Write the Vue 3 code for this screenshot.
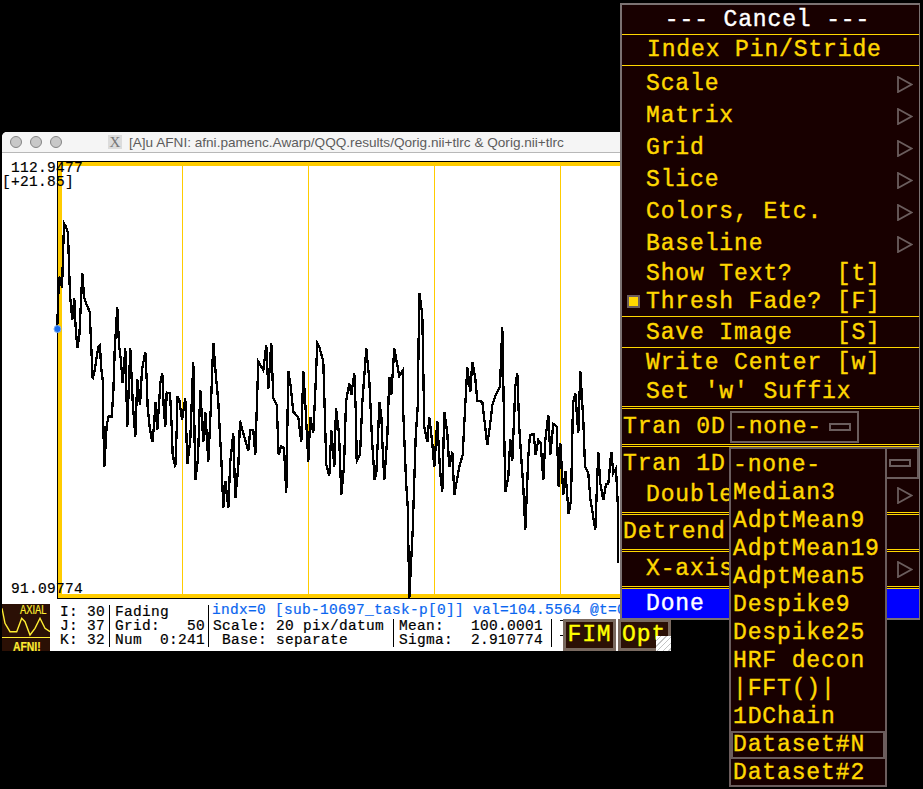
<template>
  <div class="desktop">
    <!-- graph window -->
    <div class="graph-window">
      <div class="titlebar">
        <span class="light"></span>
        <span class="light"></span>
        <span class="light"></span>
        <span class="x-icon">X</span>
        <span class="title-text">[A]u AFNI: afni.pamenc.Awarp/QQQ.results/Qorig.nii+tlrc &amp; Qorig.nii+tlrc</span>
      </div>
      <div class="plot">
        <svg class="plot-svg" width="669" height="447" viewBox="2 153 669 447">
          <rect x="57" y="161" width="614" height="438" fill="#000" />
          <rect x="58" y="162" width="613" height="436" fill="#ffcc00" />
          <rect x="62" y="166" width="609" height="428" fill="#fff" />
          <rect v-for="x in gridLines" :key="x" :x="x" y="166" width="1" height="428" fill="#ffcc00" />
          <polyline :points="tracePoints" fill="none" stroke="#000" stroke-width="2.3" shape-rendering="crispEdges" />
          <circle cx="57.5" cy="329" r="3.5" fill="#1a6ef0" stroke="#7fb0f5" stroke-width="1" />
        </svg>
        <div class="scale-top">112.9477</div>
        <div class="scale-range">[+21.85]</div>
        <div class="scale-bottom">91.09774</div>
      </div>
      <div class="info-bar">
        <div class="logo">
          <svg width="48" height="47" viewBox="2 604 48 47">
            <polyline :points="logoWave" fill="none" stroke="#ffee33" stroke-width="1.4" />
            <rect x="2" y="637" width="48" height="1" fill="#ffee33" />
          </svg>
          <span class="logo-top">AXIAL</span>
          <span class="logo-bottom">AFNI!</span>
        </div>
        <div class="info-col ijk">
          <div>I: 30</div>
          <div>J: 37</div>
          <div>K: 32</div>
        </div>
        <div class="info-col grid-col">
          <div>Fading</div>
          <div>{{ 'Grid:   50' }}</div>
          <div>{{ 'Num  0:241' }}</div>
        </div>
        <div class="info-right">
          <div class="index-line">indx=0 [sub-10697_task-p[0]] val=104.5564 @t=0</div>
          <div class="info-lower">
            <div class="info-col scale-col">
              <div>Scale: 20 pix/datum</div>
              <div>{{ ' Base: separate' }}</div>
            </div>
            <div class="info-col stats-col">
              <div>{{ 'Mean:   100.0001' }}</div>
              <div>{{ 'Sigma:  2.910774' }}</div>
            </div>
          </div>
        </div>
        <div class="ticks"></div>
        <div class="graph-btn fim">FIM</div>
        <div class="graph-btn opt">Opt</div>
        <div class="grip"></div>
      </div>
    </div>

    <!-- options menu -->
    <div class="menu">
      <div class="row cancel">{{ '--- Cancel ---' }}</div>
      <div class="sep"></div>
      <div class="row index-row">Index Pin/Stride</div>
      <div class="sep"></div>
      <div class="cascades">
        <div v-for="item in cascades" :key="item" class="row cascade">
          <span>{{ item }}</span>
          <svg class="arrow" width="16" height="17" viewBox="0 0 16 17"><path d="M1 1 L14.5 8.5 L1 16 Z" fill="none" stroke="#6b5d5d" stroke-width="1.8" /></svg>
        </div>
      </div>
      <div class="row toggle">{{ 'Show Text?   [t]' }}</div>
      <div class="row toggle">
        <span class="check"></span>{{ 'Thresh Fade? [F]' }}
      </div>
      <div class="sep"></div>
      <div class="row save-row">{{ 'Save Image   [S]' }}</div>
      <div class="sep"></div>
      <div class="row write-row">Write Center [w]</div>
      <div class="row write-row suffix">Set 'w' Suffix</div>
      <div class="double-sep"></div>
      <div class="row tran0">
        <span class="flush">Tran 0D</span>
        <div class="option-btn">-none-<span class="indicator"></span></div>
      </div>
      <div class="double-sep"></div>
      <div class="row tran1"><span class="flush">Tran 1D</span></div>
      <div class="row double-row">
        <span>Double</span>
        <svg class="arrow" width="16" height="17" viewBox="0 0 16 17"><path d="M1 1 L14.5 8.5 L1 16 Z" fill="none" stroke="#6b5d5d" stroke-width="1.8" /></svg>
      </div>
      <div class="double-sep"></div>
      <div class="row detrend"><span class="flush">Detrend</span></div>
      <div class="double-sep"></div>
      <div class="row xaxis">
        <span>X-axis</span>
        <svg class="arrow" width="16" height="17" viewBox="0 0 16 17"><path d="M1 1 L14.5 8.5 L1 16 Z" fill="none" stroke="#6b5d5d" stroke-width="1.8" /></svg>
      </div>
      <div class="double-sep"></div>
      <div class="row done">Done</div>
    </div>

    <!-- Tran 1D dropdown, open -->
    <div class="tran1-tail"><span class="indicator"></span></div>
    <div class="popup">
      <div v-for="name in tranItems" :key="name" class="popup-item">{{ name }}</div>
      <div class="popup-item boxed">Dataset#N</div>
      <div class="popup-item last">Dataset#2</div>
    </div>
  </div>
</template>

<script setup>
// traced from the plot, [x, y] in page pixels * 3 relative to the two crop origins
const traceA = [
  [22,350],[24,280],[27,200],[33,215],[36,235],[39,140],[42,40],[48,50],[54,70],[57,165],[60,255],[63,285],[67,330],[73,265],[76,335],[82,415],[88,380],[91,315],[94,255],[97,190],
  [103,265],[110,285],[119,305],[122,375],[125,440],[128,508],[134,480],[140,440],[146,408],[150,405],[153,470],[158,510],[160,640],[163,772],[170,645],[176,618],[185,620],[190,550],[194,420],[198,355],
  [202,292],[207,405],[212,445],[218,520],[226,415],[232,650],[241,415],[248,575],[256,680],[262,508],[270,585],[276,480],[286,425],[290,510],[293,595],[299,650],[307,697],[313,640],[316,575],[322,660],
  [328,570],[331,520],[337,490],[341,590],[346,650],[350,548],[360,550],[365,650],[368,735],[376,772],[380,660],[382,558],[388,570],[396,630],[406,565],[412,762],[421,690],[424,610],[430,455],[436,810],
  [444,745],[451,540],[460,695],[466,605],[475,755],[483,580],[490,398],[497,490],[505,575],[509,660],[514,745],[520,895],[526,812],[535,895],[541,755],[550,670],[556,865],[565,770],[570,632],[580,670],
  [595,722],[601,660],[610,660],[616,735],[622,545],[625,455],[640,480],[649,405],[655,538],[664,398],[670,565],[680,585],[683,660],[686,735],[694,708],[702,715],[709,848],[712,660],[715,482],[722,530],
  [730,605],[745,622],[754,697],[760,482],[766,580],[775,755],[781,622],[790,668],[796,545],[802,400],[808,410],[820,455],[826,660],[829,765],[838,798],[844,660],[853,772]
]
const traceB = [
  [18,385],[27,460],[34,645],[42,560],[48,365],[58,310],[64,345],[73,280],[78,410],[80,543],[90,525],[97,370],[109,205],[118,300],[122,390],[126,480],[134,600],[139,580],[145,450],[148,365],
  [154,405],[158,510],[163,600],[172,470],[178,290],[184,345],[193,205],[208,288],[218,272],[220,400],[228,600],[233,680],[238,955],[248,750],[257,470],[263,380],[268,38],[277,105],[280,270],[283,440],
  [292,487],[298,412],[307,490],[313,562],[322,422],[330,570],[337,637],[343,395],[352,460],[358,562],[367,515],[373,645],[388,560],[398,525],[403,430],[412,262],[421,337],[427,245],[436,295],[442,362],
  [457,365],[472,495],[482,420],[487,375],[497,345],[510,320],[517,140],[523,470],[526,637],[535,590],[541,478],[547,543],[553,400],[556,320],[562,280],[568,445],[574,535],[580,620],[586,750],[595,530],
  [600,465],[611,462],[617,525],[625,480],[632,490],[640,600],[646,480],[655,405],[661,525],[670,432],[680,440],[686,620],[691,488],[700,645],[706,572],[716,703],[723,660],[729,370],[736,340],[745,460],
  [751,272],[760,420],[765,560],[775,580],[781,655],[796,750],[805,515],[811,610],[820,660],[828,612],[835,612],[844,515],[850,580],[858,565],[865,705],[865,850]
]

const tracePoints = [
  ...traceA.map(([x, y]) => `${(50 + x / 3).toFixed(1)},${(210 + y / 3).toFixed(1)}`),
  ...traceB.map(([x, y]) => `${(330 + x / 3).toFixed(1)},${(280 + y / 3).toFixed(1)}`)
].join(' ')

const gridLines = [182, 308, 434, 560]

const logoWave = [[6,115],[15,160],[30,185],[50,185],[65,145],[75,155],[90,195],[105,175],[120,145],[135,175],[150,185]]
  .map(([x, y]) => `${(x / 3).toFixed(1)},${(570 + y / 3).toFixed(1)}`)
  .join(' ')

const cascades = ['Scale', 'Matrix', 'Grid', 'Slice', 'Colors, Etc.', 'Baseline']

const tranItems = ['-none-', 'Median3', 'AdptMean9', 'AdptMean19', 'AdptMean5', 'Despike9', 'Despike25', 'HRF decon', '|FFT()|', '1DChain']
</script>

<style>
html, body {
  background: #000;
}
</style>

<style scoped>
.desktop {
  position: relative;
  width: 923px;
  height: 789px;
  background: #000;
  overflow: hidden;
  font-family: "Liberation Mono", monospace;
}

/* graph window */
.graph-window {
  position: absolute;
  left: 2px;
  top: 132px;
  width: 669px;
  height: 519px;
  display: flex;
  flex-direction: column;
  background: #fff;
  border-radius: 5px 5px 0 0;
}

.titlebar {
  height: 21px;
  box-sizing: border-box;
  display: flex;
  align-items: center;
  gap: 8px;
  padding-left: 8px;
  background: #f5f5f5;
  border-bottom: 1px solid #b8b8b8;
  border-radius: 5px 5px 0 0;
  flex-shrink: 0;
}

.light {
  width: 12px;
  height: 12px;
  box-sizing: border-box;
  border-radius: 50%;
  background: #c8c8c8;
  border: 1px solid #858585;
}

.x-icon {
  width: 14px;
  height: 14px;
  margin-left: 38px;
  background: #dcdcdc;
  color: #777;
  font-family: "Liberation Serif", serif;
  font-size: 15px;
  line-height: 14px;
  text-align: center;
}

.title-text {
  margin-left: -1px;
  font-family: "Liberation Sans", sans-serif;
  font-size: 13.6px;
  color: #5c5c5c;
  white-space: pre;
}

.plot {
  position: relative;
  height: 447px;
  flex-shrink: 0;
  overflow: hidden;
}

.plot-svg {
  display: block;
}

.scale-top,
.scale-range,
.scale-bottom {
  position: absolute;
  font-size: 14.5px;
  line-height: 14px;
  letter-spacing: 0.3px;
  color: #000;
  white-space: pre;
  -webkit-text-stroke: 0.2px #000;
}

.scale-top {
  left: 9px;
  top: 8px;
}

.scale-range {
  left: 0;
  top: 22px;
}

.scale-bottom {
  left: 9px;
  top: 429px;
}

.info-bar {
  position: relative;
  flex: 1;
  display: flex;
  font-size: 14.5px;
  line-height: 14px;
  letter-spacing: 0.3px;
  color: #000;
  -webkit-text-stroke: 0.2px currentColor;
}

.logo {
  position: relative;
  width: 48px;
  height: 47px;
  margin-top: 4px;
  background: #2b1005;
  flex-shrink: 0;
}

.logo svg {
  display: block;
}

.logo-top,
.logo-bottom {
  position: absolute;
  color: #ffee33;
  font-family: "Liberation Sans", sans-serif;
  line-height: 11px;
  letter-spacing: 0;
  transform-origin: left top;
}

.logo-top {
  left: 18px;
  top: 1px;
  font-size: 12px;
  transform: scaleX(0.78);
}

.logo-bottom {
  left: 11px;
  top: 37px;
  font-size: 13px;
  font-weight: 700;
  transform: scaleX(0.8);
}

.info-col {
  white-space: pre;
}

.ijk {
  width: 60px;
  box-sizing: border-box;
  margin-top: 5px;
  padding-left: 10px;
  border-right: 1px solid #000;
  height: 42px;
  flex-shrink: 0;
}

.ijk div,
.grid-col div {
  height: 14px;
}

.grid-col {
  width: 99px;
  box-sizing: border-box;
  margin-top: 5px;
  padding-left: 5px;
  height: 42px;
  border-right: 1px solid #000;
  flex-shrink: 0;
}

.info-right {
  width: 343px;
  display: flex;
  flex-direction: column;
  flex-shrink: 0;
}

.index-line {
  margin-top: 3px;
  padding-left: 3px;
  height: 16px;
  color: #0a66f0;
  white-space: pre;
}

.info-lower {
  display: flex;
  height: 28px;
}

.scale-col {
  width: 185px;
  flex-shrink: 0;
  padding-left: 4px;
  border-right: 1px solid #000;
  box-sizing: border-box;
}

.stats-col {
  width: 158px;
  box-sizing: border-box;
  padding-left: 5px;
  border-right: 1px solid #000;
  flex-shrink: 0;
}

.ticks {
  position: absolute;
  left: 558px;
  top: 20px;
  width: 4px;
  height: 16px;
  box-sizing: border-box;
  border-top: 1px solid #000;
  border-bottom: 1px solid #000;
}

.graph-btn {
  position: absolute;
  top: 19px;
  width: 53px;
  height: 32px;
  box-sizing: border-box;
  display: flex;
  align-items: center;
  justify-content: center;
  background: #2b1005;
  border: 3px solid #7a6a60;
  color: #ffff00;
  font-size: 23px;
  letter-spacing: 0.9px;
  -webkit-text-stroke: 0.4px #ffff00;
}

.fim {
  left: 561px;
}

.opt {
  left: 616px;
  justify-content: flex-start;
  padding-left: 1px;
}

.grip {
  position: absolute;
  right: 0;
  bottom: 0;
  width: 15px;
  height: 15px;
  background: repeating-linear-gradient(135deg, #fff 0 3px, #c4c4c4 3px 4px);
}

/* options menu */
.menu {
  position: absolute;
  left: 620px;
  top: 3px;
  width: 300px;
  box-sizing: border-box;
  border: 2px solid #7b7272;
  border-right-width: 1px;
  background: #180000;
  color: #ffd700;
  font-size: 23px;
  letter-spacing: 0.87px;
  -webkit-text-stroke: 0.4px currentColor;
}

.row {
  display: flex;
  align-items: center;
  padding-left: 24px;
  white-space: pre;
  box-sizing: border-box;
}

.sep {
  height: 1px;
  background: #ffd700;
}

.double-sep {
  height: 3px;
  box-sizing: border-box;
  border-top: 1px solid #ffd700;
  border-bottom: 1px solid #ffd700;
}

.cancel {
  height: 29px;
  justify-content: center;
  padding-left: 0;
  padding-right: 6px;
  color: #fff;
}

.index-row {
  height: 30px;
  padding-left: 25px;
}

.cascades {
  padding-top: 2px;
}

.cascade {
  height: 32px;
  justify-content: space-between;
}

.arrow {
  margin-right: 6px;
  flex-shrink: 0;
}

.toggle {
  height: 28px;
  position: relative;
}

.check {
  position: absolute;
  left: 5px;
  top: 7px;
  width: 13px;
  height: 13px;
  box-sizing: border-box;
  border: 2px solid #6b5d5d;
  background: #ffd700;
}

.save-row {
  height: 30px;
  padding-top: 2px;
}

.write-row {
  height: 29px;
  padding-top: 1px;
}

.suffix {
  padding-top: 0;
}

.flush {
  margin-left: -23px;
  width: 107px;
  flex-shrink: 0;
}

.tran0 {
  height: 35px;
}

.option-btn {
  width: 129px;
  height: 32px;
  box-sizing: border-box;
  border: 2px solid #6b5d5d;
  padding: 0 6px 0 2px;
  display: flex;
  align-items: center;
  justify-content: space-between;
}

.indicator {
  display: block;
  width: 22px;
  height: 8px;
  box-sizing: border-box;
  border: 2px solid #6b5d5d;
}

.tran1 {
  height: 33px;
  padding-top: 1px;
}

.double-row {
  height: 32px;
  justify-content: space-between;
  padding-bottom: 2px;
}

.detrend {
  height: 34px;
}

.xaxis {
  height: 34px;
  justify-content: space-between;
}

.done {
  height: 29px;
  background: #0000ff;
  color: #fff;
}

/* Tran 1D dropdown */
.tran1-tail {
  position: absolute;
  left: 885px;
  top: 447px;
  width: 34px;
  height: 32px;
  box-sizing: border-box;
  border: 2px solid #6b5d5d;
  border-left: 0;
  display: flex;
  align-items: center;
  padding-left: 4px;
}

.popup {
  position: absolute;
  left: 729px;
  top: 447px;
  width: 158px;
  height: 340px;
  box-sizing: border-box;
  border: 2px solid #6b5d5d;
  background: #180000;
  color: #ffd700;
  font-size: 23px;
  letter-spacing: 0.87px;
  -webkit-text-stroke: 0.4px #ffd700;
  padding-top: 2px;
}

.popup-item {
  height: 28px;
  line-height: 28px;
  padding-left: 2px;
  white-space: pre;
  box-sizing: border-box;
}

.boxed {
  border: 2px solid #6b5d5d;
  padding-left: 0;
  line-height: 24px;
}

.last {
  line-height: 28px;
}
</style>
